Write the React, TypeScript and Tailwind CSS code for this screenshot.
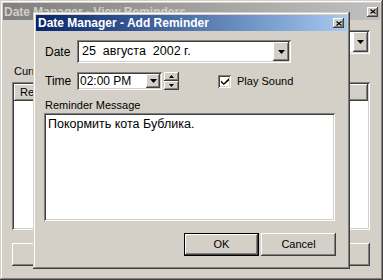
import React from "react";

const RAISED =
  "shadow-[inset_-1px_-1px_0_#404040,inset_1px_1px_0_#ffffff,inset_-2px_-2px_0_#808080,inset_2px_2px_0_#d4d0c8]";
const SUNKEN =
  "shadow-[inset_1px_1px_0_#808080,inset_-1px_-1px_0_#ffffff,inset_2px_2px_0_#404040,inset_-2px_-2px_0_#d4d0c8]";
const FRAME =
  "shadow-[inset_-1px_-1px_0_#404040,inset_1px_1px_0_#d4d0c8,inset_-2px_-2px_0_#808080,inset_2px_2px_0_#ffffff]";

function CloseBtn() {
  return (
    <div className={`w-[11px] h-[10px] bg-[#d4d0c8] ${RAISED} flex items-center justify-center`}>
      <svg width="6" height="5" viewBox="0 0 6 5">
        <path d="M0.5 0.5 L5.5 4.5 M5.5 0.5 L0.5 4.5" stroke="black" strokeWidth="1.2" />
      </svg>
    </div>
  );
}

function DownArrow() {
  return (
    <svg width="7" height="4" viewBox="0 0 7 4">
      <path d="M0 0H7L3.5 4Z" fill="black" />
    </svg>
  );
}

export default function App() {
  return (
    <div className="relative w-[383px] h-[280px] overflow-hidden bg-[#d4d0c8] text-black font-['Liberation_Sans',Arial,sans-serif] text-[11px]">
      {/* background window */}
      <div className={`w-full h-full p-[3px] flex flex-col ${FRAME}`}>
        <div className="h-[17px] flex items-center justify-between pl-[1px] pr-[2px] bg-gradient-to-r from-[#808080] to-[#c0c0c0]">
          <span className="font-bold text-[12px] leading-none text-[#d4d0c8]">
            Date Manager - View Reminders
          </span>
          <CloseBtn />
        </div>
        <div className="flex-1 flex flex-col pl-[9px] pr-[10px] pb-[11px]">
          <div className="mt-[10px] h-[24px] flex justify-end">
            <div className={`w-[180px] h-[24px] bg-white ${SUNKEN} p-[2px] flex justify-end`}>
              <div className={`w-[15px] h-full bg-[#d4d0c8] ${RAISED} flex items-center justify-center`}>
                <DownArrow />
              </div>
            </div>
          </div>
          <div className="mt-[10px] leading-[14px] pl-[2px]">Current Reminders:</div>
          <div className={`mt-[4px] flex-1 bg-white ${SUNKEN} p-[2px] flex flex-col`}>
            <div className="h-[17px] flex">
              <div className={`flex-1 bg-[#d4d0c8] ${RAISED} pl-[6px] leading-[17px]`}>Reminder</div>
              <div className={`w-[20px] bg-[#d4d0c8] ${RAISED}`} />
            </div>
          </div>
          <div className="mt-[13px] h-[23px] flex justify-between">
            <div className={`w-[75px] h-full bg-[#d4d0c8] ${RAISED}`} />
            <div className={`w-[75px] h-full bg-[#d4d0c8] ${RAISED}`} />
          </div>
        </div>
      </div>

      {/* dialog window */}
      <div className={`absolute left-[33px] top-[12px] w-[317px] h-[257px] bg-[#d4d0c8] p-[3px] flex flex-col ${FRAME}`}>
        <div className="h-[16px] flex items-center justify-between pl-[2px] pr-[3px] bg-gradient-to-r from-[#0a246a] to-[#a6caf0]">
          <span className="font-bold text-[12px] leading-none text-white">
            Date Manager - Add Reminder
          </span>
          <CloseBtn />
        </div>
        <div className="flex-1 flex flex-col pl-[8px] pr-[11px]">
          <div className="mt-[9px] h-[23px] flex items-center">
            <span className="w-[33px] pl-[1px] text-[12px]">Date</span>
            <div className={`w-[214px] h-[23px] bg-white ${SUNKEN} p-[2px] flex items-center`}>
              <span className="flex-1 pl-[3px] whitespace-pre text-[12.5px]">25  августа  2002 г.</span>
              <div className={`w-[16px] h-full bg-[#d4d0c8] ${RAISED} flex items-center justify-center`}>
                <DownArrow />
              </div>
            </div>
          </div>
          <div className="mt-[9px] h-[18px] flex items-center">
            <span className="w-[33px] pl-[1px] text-[12px]">Time</span>
            <div className={`w-[85px] h-[18px] bg-white ${SUNKEN} p-[2px] flex items-center`}>
              <span className="flex-1 pl-[1px] text-[12px]">02:00 PM</span>
              <div className={`w-[14px] h-full bg-[#d4d0c8] ${RAISED} flex items-center justify-center`}>
                <DownArrow />
              </div>
            </div>
            <div className="ml-[2px] w-[15px] h-[18px] flex flex-col">
              <div className={`flex-1 bg-[#d4d0c8] ${RAISED} flex items-center justify-center`}>
                <svg width="5" height="3" viewBox="0 0 5 3">
                  <path d="M0 3H5L2.5 0Z" fill="black" />
                </svg>
              </div>
              <div className={`flex-1 bg-[#d4d0c8] ${RAISED} flex items-center justify-center`}>
                <svg width="5" height="3" viewBox="0 0 5 3">
                  <path d="M0 0H5L2.5 3Z" fill="black" />
                </svg>
              </div>
            </div>
            <div className={`ml-[39px] w-[13px] h-[13px] bg-white ${SUNKEN} flex items-center justify-center`}>
              <svg width="8" height="7" viewBox="0 0 8 7">
                <path d="M0 2.5L2.8 5.2L8 0V2.5L2.8 7L0 4.5Z" fill="black" />
              </svg>
            </div>
            <span className="ml-[6px]">Play Sound</span>
          </div>
          <div className="mt-[8px] leading-[14px] pl-[1px]">Reminder Message</div>
          <div className={`mt-[1px] w-[291px] h-[108px] bg-white ${SUNKEN} pl-[4px] pt-[4px] leading-[14px] text-[12.5px]`}>
            Покормить кота Бублика.
          </div>
          <div className="mt-[12px] h-[23px] flex justify-end gap-[2px]">
            <div className="w-[75px] h-full border border-black">
              <div className={`w-full h-full bg-[#d4d0c8] ${RAISED} flex items-center justify-center`}>OK</div>
            </div>
            <div className={`w-[75px] h-full bg-[#d4d0c8] ${RAISED} flex items-center justify-center`}>Cancel</div>
          </div>
        </div>
      </div>
    </div>
  );
}
